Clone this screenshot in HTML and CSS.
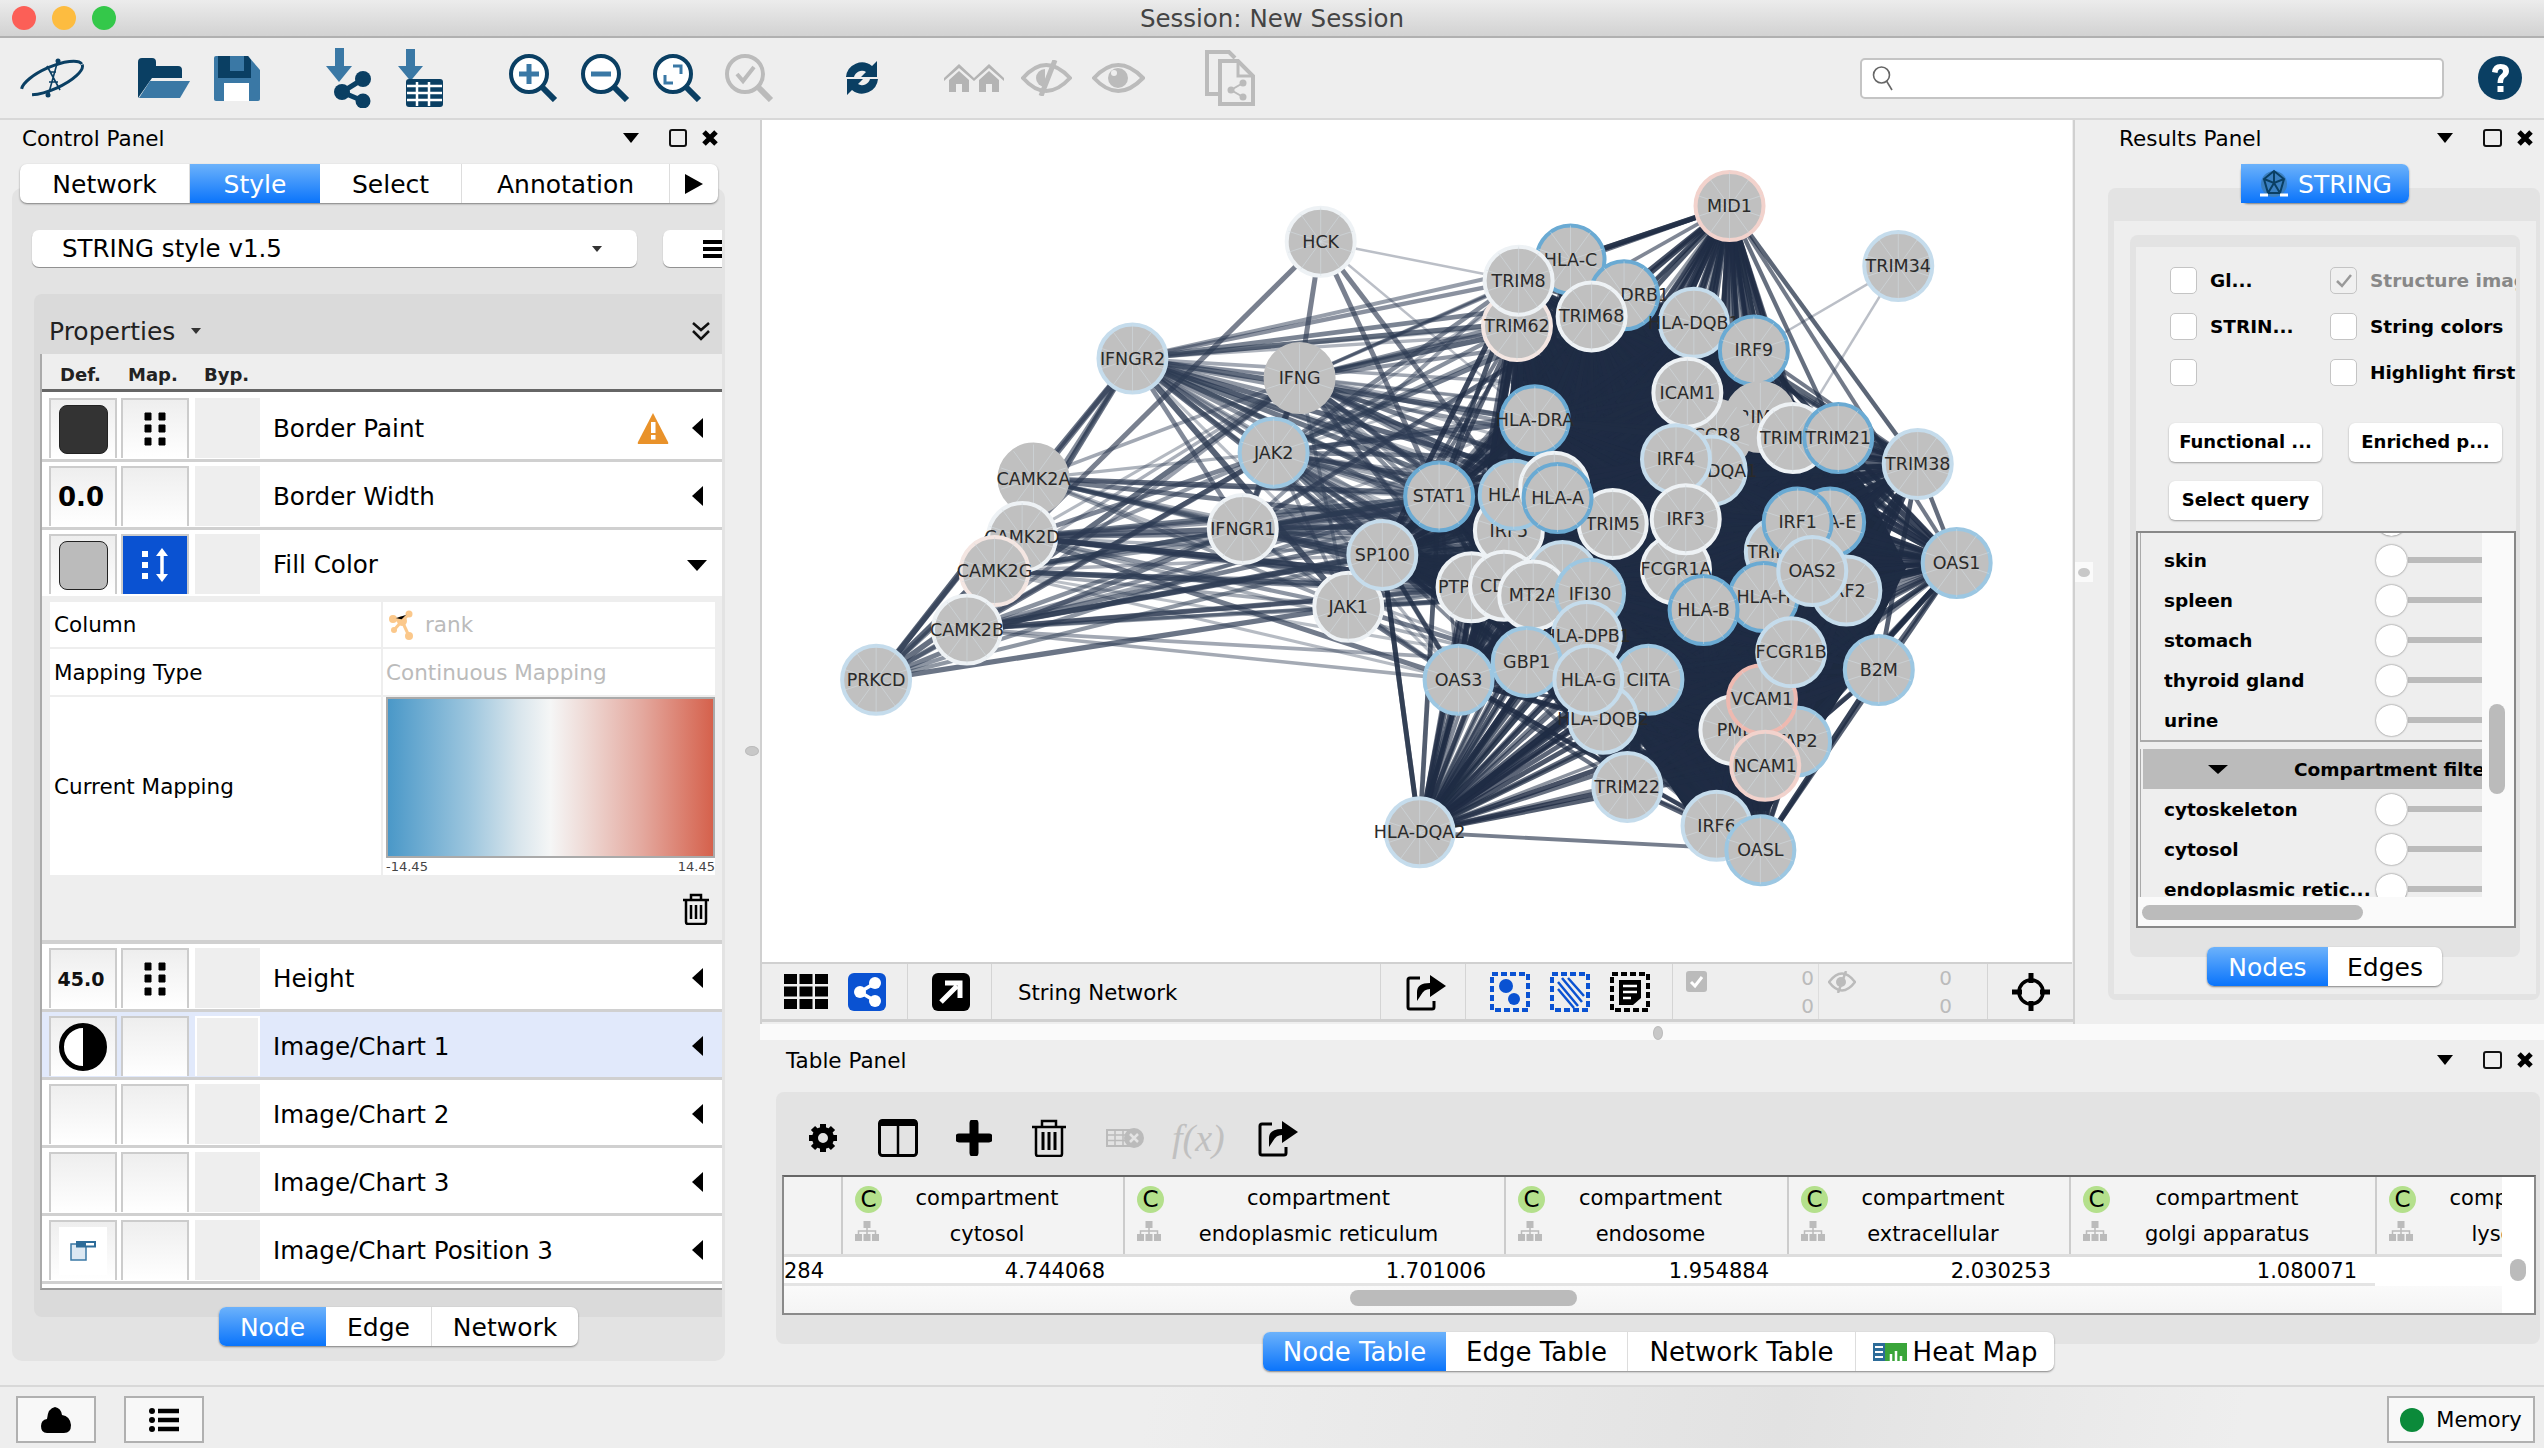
FILE: index.html
```html
<!DOCTYPE html>
<html lang="en">
<head>
    <meta charset="UTF-8">
    <title>Session: New Session</title>
    <link rel="stylesheet" href="styles.css">
</head>
<body>
    <div class="titlebar">
        <span class="light red"></span><span class="light amber"></span><span class="light green"></span>
        <span class="title">Session: New Session</span>
    </div>

    <div class="toolbar">
        <svg class="tb-logo" width="65" height="40" viewBox="0 0 65 40"><ellipse cx="32" cy="20" rx="33" ry="11" transform="rotate(-24 32 20)" fill="none" stroke="#0a3f63" stroke-width="3" stroke-dasharray="62 14 70 20"/><path d="M38 2 28 38M27 8 40 32M30 14 36 14M29 24 38 24" stroke="#0a3f63" stroke-width="1.6" fill="none"/><circle cx="38" cy="3" r="2.5" fill="#0a3f63"/><circle cx="28" cy="37" r="2.5" fill="#0a3f63"/></svg>
        <svg class="tb-g2" width="52" height="40" viewBox="0 0 52 40"><path d="M0 4Q0 0 4 0H14Q18 0 18 4V8H40Q44 8 44 12V20H14L0 40Z" fill="#0a3f63"/><path d="M12 23H52L42 40H1Z" fill="#3a78a5"/></svg>
        <svg class="tb-gap24" width="46" height="45" viewBox="0 0 46 45"><path d="M0 2Q0 0 2 0H34L46 14V43Q46 45 44 45H2Q0 45 0 43Z" fill="#3a78a5"/><path d="M4 0H34L37 4V22H4Z" fill="#0a3f63"/><rect x="16" y="0" width="14" height="15" fill="#3a78a5"/><rect x="10" y="27" width="25" height="18" fill="#fff"/></svg>
        <svg class="tb-g3" width="47" height="60" viewBox="0 0 47 60"><path d="M10 0H19V18H27L14 34 1 18H10Z" fill="#3a78a5"/><g fill="#0a3f63"><circle cx="38" cy="31" r="8"/><circle cx="17" cy="44" r="8"/><circle cx="38" cy="53" r="7.5"/></g><path d="M38 31 17 44 38 53" stroke="#0a3f63" stroke-width="5" fill="none"/></svg>
        <svg class="tb-gap25" width="46" height="58" viewBox="0 0 46 58"><path d="M9 0H18V17H26L13.5 32 1 17H9Z" fill="#3a78a5"/><rect x="9" y="30" width="37" height="28" rx="3" fill="#0a3f63"/><path d="M10 37H45M10 44H45M10 51H45M20 33V57M32 33V57" stroke="#fff" stroke-width="2.5"/></svg>
        <svg class="tb-g4" width="50" height="48" viewBox="0 0 50 48"><circle cx="21" cy="20" r="18" fill="#fff" stroke="#0a3f63" stroke-width="4"/><path d="M34 33 47 46" stroke="#0a3f63" stroke-width="6"/><path d="M21 10V30M11 20H31" stroke="#3a78a5" stroke-width="5"/></svg>
        <svg class="tb-gap22" width="50" height="48" viewBox="0 0 50 48"><circle cx="21" cy="20" r="18" fill="#fff" stroke="#0a3f63" stroke-width="4"/><path d="M34 33 47 46" stroke="#0a3f63" stroke-width="6"/><path d="M11 20H31" stroke="#3a78a5" stroke-width="5"/></svg>
        <svg class="tb-gap22" width="50" height="48" viewBox="0 0 50 48"><circle cx="21" cy="20" r="18" fill="#fff" stroke="#0a3f63" stroke-width="4"/><path d="M34 33 47 46" stroke="#0a3f63" stroke-width="6"/><path d="M21 12H29V20M13 21V29H21" fill="none" stroke="#3a78a5" stroke-width="3"/></svg>
        <svg class="tb-gap22" width="50" height="48" viewBox="0 0 50 48"><circle cx="21" cy="20" r="18" fill="none" stroke="#bbb" stroke-width="4"/><path d="M34 33 47 46" stroke="#bbb" stroke-width="6"/><path d="M13 20 19 27 30 13" fill="none" stroke="#bbb" stroke-width="4"/></svg>
        <svg class="tb-refresh" width="36" height="36" viewBox="0 0 36 36"><path d="M2 17A16 16 0 0 1 28 6L33 1V17H17L22 12A8 8 0 0 0 10 17ZM34 19A16 16 0 0 1 8 30L3 35V19H19L14 24A8 8 0 0 0 26 19Z" fill="#0a3f63"/></svg>
        <svg class="tb-g5" width="60" height="28" viewBox="0 0 60 28"><path d="M0 14 15 0 30 14 45 0 60 14V17L45 4 30 17 15 4 0 17Z" fill="#b4b4b4"/><path d="M5 16 15 7 25 16V28H18V20H12V28H5ZM35 16 45 7 55 16V28H48V20H42V28H35Z" fill="#b4b4b4"/></svg>
        <svg class="tb-gap17" width="51" height="36" viewBox="0 0 51 36"><path d="M2 18Q25 -8 49 18 25 44 2 18Z" fill="none" stroke="#bbb" stroke-width="4"/><path d="M24 9A9 9 0 1 0 24 27Z" fill="#bbb"/><path d="M34 0 20 36" stroke="#bbb" stroke-width="5"/></svg>
        <svg class="tb-gap20" width="53" height="32" viewBox="0 0 53 32"><path d="M2 16Q26 -10 51 16 26 42 2 16Z" fill="none" stroke="#bbb" stroke-width="4"/><circle cx="26" cy="16" r="10" fill="#bbb"/><circle cx="22" cy="11" r="3" fill="#eee"/></svg>
        <svg class="tb-doc" width="50" height="56" viewBox="0 0 50 56"><path d="M14 44H2V2H24L30 8" fill="none" stroke="#bbb" stroke-width="4"/><path d="M15 11H33L48 26V54H15Z" fill="#eee" stroke="#bbb" stroke-width="4"/><path d="M33 11V26H48" fill="none" stroke="#bbb" stroke-width="3"/><g fill="#bbb"><circle cx="38" cy="33" r="3.5"/><circle cx="26" cy="40" r="3.5"/><circle cx="38" cy="47" r="3.5"/></g><path d="M38 33 26 40 38 47" stroke="#bbb" stroke-width="2" fill="none"/></svg>
        <div class="search">
            <svg width="22" height="26" viewBox="0 0 22 26"><circle cx="9.5" cy="10" r="8" fill="none" stroke="#666" stroke-width="1.6"/><path d="M14.5 16 20 25" stroke="#666" stroke-width="1.6"/></svg>
        </div>
        <svg class="tb-help" width="44" height="44" viewBox="0 0 44 44"><circle cx="22" cy="22" r="22" fill="#0a3f63"/><path d="M14 16Q15 8 22.5 8 31 8 31 15 31 19 26.5 22 25 23.5 25 27H19.5Q19.5 21 23 18.5 25 17 25 15.5 25 13 22.5 13 20 13 19.5 17Z" fill="#fff"/><rect x="19.5" y="30" width="6" height="6" fill="#fff"/></svg>
    </div>

    <div class="main">
        <div class="left">
            <div class="panel-head l-head">
                <span class="panel-title">Control Panel</span>
                <span class="head-icons"><i class="tri-down"></i><i class="head-max"></i><svg width="18" height="18" viewBox="0 0 18 18"><path d="M3 3 15 15M15 3 3 15" stroke="#000" stroke-width="5"/></svg></span>
            </div>
            <div class="seg seg-main">
                <span class="w170">Network</span><span class="w130 on">Style</span><span class="w142">Select</span><span class="w208">Annotation</span><span class="w48"><i class="tri-right"></i></span>
            </div>
            <div class="cp-box">
                <div class="style-row">
                    <div class="combo"><span>STRING style v1.5</span><i class="tri-small"></i></div>
                    <div class="menu-btn"><svg width="20" height="18" viewBox="0 0 20 18"><path d="M0 2H20M0 9H20M0 16H20" stroke="#000" stroke-width="4"/></svg></div>
                </div>
                <div class="props">
                    <div class="props-head">
                        <span>Properties</span><i class="tri-small"></i>
                        <svg class="props-chev" width="20" height="20" viewBox="0 0 20 20"><path d="M2 2 10 9 18 2M2 10 10 18 18 10" fill="none" stroke="#111" stroke-width="2.5"/></svg>
                    </div>
                    <div class="vp-table">
                        <div class="vp-cols"><span class="c-def">Def.</span><span class="c-map">Map.</span><span>Byp.</span></div>

                        <div class="vp-row">
                            <div class="cell"><span class="swatch dark"></span></div>
                            <div class="cell"><svg class="dots" width="22" height="34" viewBox="0 0 22 34"><path d="M1 1H7V8H1ZM15 1H21V8H15ZM1 13H7V20H1ZM15 13H21V20H15ZM1 26H7V33H1ZM15 26H21V33H15Z" stroke="#000" stroke-linejoin="round"/></svg></div>
                            <div class="byp"></div>
                            <span class="vp-name">Border Paint</span>
                            <svg class="warn" width="32" height="32" viewBox="0 0 32 32"><path d="M16 1 31 30Q32 32 30 32H2Q0 32 1 30Z" fill="#e9922a"/><rect x="14" y="10" width="4.5" height="11" fill="#fff"/><rect x="14" y="23" width="4.5" height="4.5" fill="#fff"/></svg>
                            <i class="tri-left"></i>
                        </div>
                        <div class="vp-row">
                            <div class="cell"><span class="val-big">0.0</span></div>
                            <div class="cell"></div>
                            <div class="byp"></div>
                            <span class="vp-name">Border Width</span>
                            <i class="tri-left"></i>
                        </div>
                        <div class="vp-row open">
                            <div class="cell"><span class="swatch grey"></span></div>
                            <div class="cell blue"><svg width="28" height="34" viewBox="0 0 28 34"><path d="M1 3H7V9H1ZM1 14H7V20H1ZM1 25H7V31H1Z" fill="#fff"/><path d="M21 5V29" stroke="#fff" stroke-width="3.5"/><path d="M15 8 21 0 27 8ZM15 26 21 34 27 26Z" fill="#fff"/></svg></div>
                            <div class="byp"></div>
                            <span class="vp-name">Fill Color</span>
                            <i class="tri-down big"></i>
                        </div>
                        <div class="vp-detail">
                            <div class="d-grid">
                                <div class="d-key h44">Column</div>
                                <div class="d-val"><svg width="24" height="30" viewBox="0 0 24 30"><g fill="#fbc88b"><circle cx="20" cy="4" r="3.5"/><circle cx="4" cy="9" r="4"/><circle cx="13" cy="11" r="5"/><circle cx="5" cy="20" r="3"/><circle cx="20" cy="26" r="4"/></g><path d="M20 4 13 11 4 9M13 11 5 20M13 11 20 26" stroke="#fbc88b" stroke-width="3"/></svg><span>rank</span></div>
                                <div class="d-key h46">Mapping Type</div>
                                <div class="d-val plain">Continuous Mapping</div>
                                <div class="d-key h178">Current Mapping</div>
                                <div class="d-map">
                                    <div class="gradient"></div>
                                    <div class="grad-labels"><span>-14.45</span><span>14.45</span></div>
                                </div>
                            </div>
                            <div class="d-tools">
                                <svg width="28" height="32" viewBox="0 0 28 32"><path d="M1 7H27M9 6V2H19V6" fill="none" stroke="#000" stroke-width="2.5"/><path d="M4 8V29Q4 31 6 31H22Q24 31 24 29V8" fill="none" stroke="#000" stroke-width="2.5"/><path d="M9 12V26M14 12V26M19 12V26" stroke="#000" stroke-width="2.5"/></svg>
                            </div>
                        </div>
                        <div class="vp-row">
                            <div class="cell"><span class="val-small">45.0</span></div>
                            <div class="cell"><svg class="dots" width="22" height="34" viewBox="0 0 22 34"><path d="M1 1H7V8H1ZM15 1H21V8H15ZM1 13H7V20H1ZM15 13H21V20H15ZM1 26H7V33H1ZM15 26H21V33H15Z" stroke="#000" stroke-linejoin="round"/></svg></div>
                            <div class="byp"></div>
                            <span class="vp-name">Height</span>
                            <i class="tri-left"></i>
                        </div>
                        <div class="vp-row picked">
                            <div class="cell"><svg width="48" height="48" viewBox="0 0 48 48"><circle cx="24" cy="24" r="21.5" fill="#fff" stroke="#000" stroke-width="5"/><path d="M24 2A22 22 0 0 1 24 46Z"/></svg></div>
                            <div class="cell"></div>
                            <div class="byp"></div>
                            <span class="vp-name">Image/Chart 1</span>
                            <i class="tri-left"></i>
                        </div>
                        <div class="vp-row">
                            <div class="cell"></div><div class="cell"></div><div class="byp"></div>
                            <span class="vp-name">Image/Chart 2</span>
                            <i class="tri-left"></i>
                        </div>
                        <div class="vp-row">
                            <div class="cell"></div><div class="cell"></div><div class="byp"></div>
                            <span class="vp-name">Image/Chart 3</span>
                            <i class="tri-left"></i>
                        </div>
                        <div class="vp-row">
                            <div class="cell"><span class="pos-box"><svg width="26" height="20" viewBox="0 0 26 20"><rect x="1" y="3" width="15" height="16" fill="#dce8f2" stroke="#3a78a5" stroke-width="1.5"/><rect x="6" y="0" width="20" height="6.5" fill="#2d6c99"/><rect x="16" y="2" width="8" height="2.5" fill="#fff"/></svg></span></div>
                            <div class="cell"></div><div class="byp"></div>
                            <span class="vp-name">Image/Chart Position 3</span>
                            <i class="tri-left"></i>
                        </div>
                    </div>
                </div>
                <div class="seg seg-bottom">
                    <span class="w107 on">Node</span><span class="w106">Edge</span><span class="w146">Network</span>
                </div>
            </div>
        </div>

        <div class="work">
            <div class="work-top">
                <div class="net-col">
                    <svg id="graph" class="graph" viewBox="762 120 1310 842"></svg>
                    <div class="net-bar">
                        <div class="nb nb1">
                            <svg width="44" height="35" viewBox="0 0 44 35"><path d="M0 0H13V10H0ZM15.5 0H28.5V10H15.5ZM31 0H44V10H31ZM0 12.5H13V22.5H0ZM15.5 12.5H28.5V22.5H15.5ZM31 12.5H44V22.5H31ZM0 25H13V35H0ZM15.5 25H28.5V35H15.5ZM31 25H44V35H31Z"/></svg>
                            <svg width="38" height="38" viewBox="0 0 38 38"><rect width="38" height="38" rx="6" fill="#0a52d2"/><g fill="#fff"><circle cx="27" cy="10" r="6"/><circle cx="12" cy="19" r="6"/><circle cx="27" cy="28" r="6"/></g><path d="M27 10 12 19 27 28" stroke="#fff" stroke-width="3.5" fill="none"/></svg>
                        </div>
                        <div class="nb nb2">
                            <svg width="38" height="38" viewBox="0 0 38 38"><rect width="38" height="38" rx="6"/><path d="M9 29 25 13M13 10H28V25" fill="none" stroke="#fff" stroke-width="5"/></svg>
                        </div>
                        <div class="nb nb3">String Network</div>
                        <div class="nb nb4">
                            <svg width="40" height="38" viewBox="0 0 40 38"><path d="M14 5H4Q2 5 2 7V34Q2 36 4 36H26Q28 36 28 34V28" fill="none" stroke="#000" stroke-width="3"/><path d="M11 28V19Q11 10 24 10V2L40 13 24 24V16Q18 16 15 22Z"/></svg>
                        </div>
                        <div class="nb nb5">
                            <svg width="40" height="40" viewBox="0 0 40 40"><rect x="2" y="2" width="36" height="36" fill="none" stroke="#0a52d2" stroke-width="4" stroke-dasharray="6 3"/><circle cx="16" cy="14" r="7" fill="#0a52d2"/><circle cx="24" cy="27" r="6" fill="#0a52d2"/></svg>
                            <svg width="40" height="40" viewBox="0 0 40 40"><rect x="2" y="2" width="36" height="36" fill="none" stroke="#0a52d2" stroke-width="4" stroke-dasharray="6 3"/><path d="M8 10 28 34M8 17 24 36M12 6 32 30M18 6 34 24" stroke="#0a52d2" stroke-width="2.5"/></svg>
                            <svg width="40" height="40" viewBox="0 0 40 40"><rect x="2" y="2" width="36" height="36" fill="none" stroke="#000" stroke-width="4" stroke-dasharray="6 3"/><path d="M9 8H31V26L23 33H9Z"/><path d="M13 14H27M13 20H27M13 26H21" stroke="#fff" stroke-width="2.5"/></svg>
                        </div>
                        <div class="nb nb6">
                            <svg class="cnt-ico" width="21" height="21" viewBox="0 0 21 21"><rect width="21" height="21" rx="3" fill="#bbb"/><path d="M5 11 9 15 16 6" fill="none" stroke="#fff" stroke-width="3"/></svg>
                            <div class="cnt"><span>0</span><span>0</span></div>
                            <svg class="cnt-ico" width="28" height="22" viewBox="0 0 28 22"><path d="M1 11Q14 -6 27 11 14 28 1 11Z" fill="none" stroke="#bbb" stroke-width="2.5"/><circle cx="13" cy="11" r="5" fill="#bbb"/><path d="M18 0 10 22" stroke="#bbb" stroke-width="2.5"/></svg>
                            <div class="cnt wide"><span>0</span><span>0</span></div>
                        </div>
                        <div class="nb nb7">
                            <svg width="38" height="38" viewBox="0 0 38 38"><circle cx="19" cy="19" r="12" fill="none" stroke="#000" stroke-width="3.5"/><path d="M19 0V10M19 28V38M0 19H10M28 19H38" stroke="#000" stroke-width="5"/></svg>
                        </div>
                    </div>
                    <span class="grip grip-left"></span>
                </div>
                <div class="results">
                    <span class="grip-box"><i></i></span>
                    <div class="panel-head r-head">
                        <span class="panel-title">Results Panel</span>
                        <span class="head-icons"><i class="tri-down"></i><i class="head-max"></i><svg width="18" height="18" viewBox="0 0 18 18"><path d="M3 3 15 15M15 3 3 15" stroke="#000" stroke-width="5"/></svg></span>
                    </div>
                    <div class="seg seg-string">
                        <span class="w168 on"><svg width="32" height="30" viewBox="0 0 32 30"><circle cx="16" cy="15" r="13" fill="#3a7fc0"/><path d="M16 2 6 10 10 24H22L26 10ZM16 2V14M6 10 16 14 26 10M10 24 16 14 22 24" fill="none" stroke="#0a3f63" stroke-width="2"/><path d="M2 26H10M22 26H30" stroke="#fff" stroke-width="3"/></svg>STRING</span>
                    </div>
                    <div class="r-box">
                        <div class="r-inner">
                            <div class="r-well">
                                <div class="r-pad">
                                    <div class="opts">
                                        <label class="opt"><i class="chk"></i>Gl...</label>
                                        <label class="opt off"><i class="chk ticked"><svg width="20" height="16" viewBox="0 0 20 16"><path d="M3 8 8 13 17 2" fill="none" stroke="#999" stroke-width="2.5"/></svg></i>Structure image</label>
                                        <label class="opt"><i class="chk"></i>STRIN...</label>
                                        <label class="opt"><i class="chk"></i>String colors</label>
                                        <label class="opt"><i class="chk"></i></label>
                                        <label class="opt"><i class="chk"></i>Highlight first</label>
                                    </div>
                                    <div class="opt-btns">
                                        <span class="r-btn">Functional ...</span><span class="r-btn">Enriched p...</span><span class="r-btn">Select query</span>
                                    </div>
                                </div>
                                <div class="scrollbox">
                                    <div class="sb-top">
                                        <div class="sb-view">
                                            <div class="f-list">
                                                <div class="f-group">
                                                    <div class="f-row"><span></span><i class="knob"></i></div>
                                                    <div class="f-row"><span>skin</span><i class="knob"></i></div>
                                                    <div class="f-row"><span>spleen</span><i class="knob"></i></div>
                                                    <div class="f-row"><span>stomach</span><i class="knob"></i></div>
                                                    <div class="f-row"><span>thyroid gland</span><i class="knob"></i></div>
                                                    <div class="f-row"><span>urine</span><i class="knob"></i></div>
                                                </div>
                                                <div class="f-group second">
                                                    <div class="f-title"><i class="tri-down wide"></i><span>Compartment filter</span></div>
                                                    <div class="f-row"><span>cytoskeleton</span><i class="knob"></i></div>
                                                    <div class="f-row"><span>cytosol</span><i class="knob"></i></div>
                                                    <div class="f-row"><span>endoplasmic retic...</span><i class="knob"></i></div>
                                                </div>
                                            </div>
                                        </div>
                                        <div class="sb-v"><i></i></div>
                                    </div>
                                    <div class="sb-h"><i></i></div>
                                </div>
                            </div>
                            <div class="seg seg-nodes">
                                <span class="w121 on">Nodes</span><span class="w114">Edges</span>
                            </div>
                        </div>
                    </div>
                </div>
            </div>

            <div class="split-h"><span class="grip"></span></div>

            <div class="table-panel">
                <div class="panel-head t-head">
                    <span class="panel-title">Table Panel</span>
                    <span class="head-icons"><i class="tri-down"></i><i class="head-max"></i><svg width="18" height="18" viewBox="0 0 18 18"><path d="M3 3 15 15M15 3 3 15" stroke="#000" stroke-width="5"/></svg></span>
                </div>
                <div class="t-box">
                    <div class="t-tools">
                        <svg class="tt-gear" width="30" height="30" viewBox="0 0 30 30"><path d="M15 5V1M15 29V25M5 15H1M29 15H25M8 8 5 5M25 25 22 22M22 8 25 5M5 25 8 22" stroke="#000" stroke-width="6"/><circle cx="15" cy="15" r="8" fill="none" stroke="#000" stroke-width="6"/></svg>
                        <svg class="tt-split" width="40" height="38" viewBox="0 0 40 38"><rect x="1.5" y="1.5" width="37" height="35" rx="3" fill="none" stroke="#000" stroke-width="3"/><rect x="1" y="1" width="38" height="6" rx="2"/><path d="M20 4V36" stroke="#000" stroke-width="2.5"/></svg>
                        <svg class="tt-plus" width="36" height="36" viewBox="0 0 36 36"><path d="M18 3V33M3 18H33" stroke="#000" stroke-width="9" stroke-linecap="round"/></svg>
                        <svg class="tt-trash" width="34" height="38" viewBox="0 0 34 38"><path d="M0 8H34M10 7V2H24V7" fill="none" stroke="#000" stroke-width="2.5"/><path d="M4 9V35Q4 37 6 37H28Q30 37 30 35V9" fill="none" stroke="#000" stroke-width="2.5"/><path d="M11 13V31M17 13V31M23 13V31" stroke="#000" stroke-width="3"/></svg>
                        <svg class="tt-grid" width="39" height="22" viewBox="0 0 39 22"><rect x="1" y="3" width="24" height="16" fill="none" stroke="#bbb" stroke-width="2"/><path d="M1 8H25M1 13.5H25M9 3V19M17 3V19" stroke="#bbb" stroke-width="1.5"/><circle cx="28" cy="11" r="10" fill="#bbb"/><path d="M24 7 32 15M32 7 24 15" stroke="#e3e3e3" stroke-width="2.5"/></svg>
                        <span class="tt-fx">f(x)</span>
                        <svg class="tt-share" width="42" height="38" viewBox="0 0 40 38"><path d="M14 5H4Q2 5 2 7V34Q2 36 4 36H26Q28 36 28 34V28" fill="none" stroke="#000" stroke-width="3"/><path d="M11 28V19Q11 10 24 10V2L40 13 24 24V16Q18 16 15 22Z"/></svg>
                    </div>
                    <div class="tbl">
                        <div class="tbl-main">
                            <div class="tbl-head">
                                <div class="th th0"></div>
                                <div class="th w282"><i class="col-c">C</i><span>compartment<br>cytosol</span><svg class="col-tree" width="24" height="20" viewBox="0 0 24 20"><path d="M8.5 0H15.5V7H8.5ZM0 13H7V20H0ZM8.5 13H15.5V20H8.5ZM17 13H24V20H17Z" fill="#bbb"/><path d="M12 7V13M3.5 13V10H20.5V13" fill="none" stroke="#bbb" stroke-width="1.5"/></svg></div>
                                <div class="th w381"><i class="col-c">C</i><span>compartment<br>endoplasmic reticulum</span><svg class="col-tree" width="24" height="20" viewBox="0 0 24 20"><path d="M8.5 0H15.5V7H8.5ZM0 13H7V20H0ZM8.5 13H15.5V20H8.5ZM17 13H24V20H17Z" fill="#bbb"/><path d="M12 7V13M3.5 13V10H20.5V13" fill="none" stroke="#bbb" stroke-width="1.5"/></svg></div>
                                <div class="th w283"><i class="col-c">C</i><span>compartment<br>endosome</span><svg class="col-tree" width="24" height="20" viewBox="0 0 24 20"><path d="M8.5 0H15.5V7H8.5ZM0 13H7V20H0ZM8.5 13H15.5V20H8.5ZM17 13H24V20H17Z" fill="#bbb"/><path d="M12 7V13M3.5 13V10H20.5V13" fill="none" stroke="#bbb" stroke-width="1.5"/></svg></div>
                                <div class="th w282"><i class="col-c">C</i><span>compartment<br>extracellular</span><svg class="col-tree" width="24" height="20" viewBox="0 0 24 20"><path d="M8.5 0H15.5V7H8.5ZM0 13H7V20H0ZM8.5 13H15.5V20H8.5ZM17 13H24V20H17Z" fill="#bbb"/><path d="M12 7V13M3.5 13V10H20.5V13" fill="none" stroke="#bbb" stroke-width="1.5"/></svg></div>
                                <div class="th w306"><i class="col-c">C</i><span>compartment<br>golgi apparatus</span><svg class="col-tree" width="24" height="20" viewBox="0 0 24 20"><path d="M8.5 0H15.5V7H8.5ZM0 13H7V20H0ZM8.5 13H15.5V20H8.5ZM17 13H24V20H17Z" fill="#bbb"/><path d="M12 7V13M3.5 13V10H20.5V13" fill="none" stroke="#bbb" stroke-width="1.5"/></svg></div>
                                <div class="th w282"><i class="col-c">C</i><span>compartment<br>lysosome</span><svg class="col-tree" width="24" height="20" viewBox="0 0 24 20"><path d="M8.5 0H15.5V7H8.5ZM0 13H7V20H0ZM8.5 13H15.5V20H8.5ZM17 13H24V20H17Z" fill="#bbb"/><path d="M12 7V13M3.5 13V10H20.5V13" fill="none" stroke="#bbb" stroke-width="1.5"/></svg></div>
                            </div>
                            <div class="tbl-row">
                                <span class="td th0 first">284</span><span class="td w282">4.744068</span><span class="td w381">1.701006</span><span class="td w283">1.954884</span><span class="td w282">2.030253</span><span class="td w306">1.080071</span>
                            </div>
                            <div class="tbl-scroll"><i></i></div>
                        </div>
                        <div class="tbl-v"><i></i></div>
                    </div>
                </div>
                <div class="seg seg-table">
                    <span class="w183 on">Node Table</span><span class="w182">Edge Table</span><span class="w228">Network Table</span><span class="w198"><svg width="34" height="18" viewBox="0 0 34 18"><rect width="12" height="18" fill="#2d6c99"/><rect x="12" width="22" height="18" fill="#3aa53a"/><path d="M2 4H10M2 9H10M2 14H10" stroke="#fff" stroke-width="2"/><path d="M18 18V11M23 18V8M28 18V13" stroke="#fff" stroke-width="2.5"/></svg>Heat Map</span>
                </div>
            </div>
        </div>
    </div>

    <div class="statusbar">
        <span class="st-btn"><svg width="30" height="30" viewBox="0 0 30 30"><path d="M6 28Q0 28 0 21 0 15 6 14 7 3 14 2 20 3 21 10 29 11 30 20 30 28 23 28Z"/></svg></span>
        <span class="st-btn"><svg width="30" height="24" viewBox="0 0 30 24"><g><circle cx="3" cy="3" r="3"/><circle cx="3" cy="12" r="3"/><circle cx="3" cy="21" r="3"/></g><path d="M9 3H30M9 12H30M9 21H30" stroke="#000" stroke-width="4.5"/></svg></span>
        <span class="st-btn memory"><i></i>Memory</span>
    </div>

    <script src="graph.js"></script>
</body>
</html>
```
FILE: styles.css
```css
* {
    box-sizing: border-box;
}
html, body {
    margin: 0;
    padding: 0;
}
body {
    width: 2544px;
    height: 1448px;
    overflow: hidden;
    background-color: #eee;
    color: #000;
    font-family: "DejaVu Sans", sans-serif;
    font-size: 23px;
    display: flex;
    flex-direction: column;
}
i {
    font-style: normal;
    display: block;
}
svg {
    display: block;
    flex: none;
}

/* window chrome */
.titlebar {
    height: 38px;
    flex: none;
    display: flex;
    align-items: center;
    padding-left: 12px;
    gap: 16px;
    position: relative;
    background: linear-gradient(#ececec, #d2d2d2);
    border-bottom: 2px solid #b0b0b0;
}
.light {
    width: 24px;
    height: 24px;
    border-radius: 50%;
}
.red { background-color: #fc5f57; }
.amber { background-color: #fdbc40; }
.green { background-color: #34c84a; }
.title {
    position: absolute;
    left: 0;
    right: 0;
    text-align: center;
    color: #444;
    font-size: 24.5px;
}

/* main toolbar */
.toolbar {
    height: 82px;
    flex: none;
    display: flex;
    align-items: center;
    padding: 0 22px 0 20px;
    border-bottom: 2px solid #d8d8d8;
}
.tb-g2 { margin-left: 53px; }
.tb-gap24 { margin-left: 24px; }
.tb-g3 { margin-left: 65px; }
.tb-gap25 { margin-left: 25px; }
.tb-g4 { margin-left: 65px; }
.tb-gap22 { margin-left: 22px; }
.tb-refresh { margin-left: 70px; }
.tb-g5 { margin-left: 64px; }
.tb-gap17 { margin-left: 17px; }
.tb-gap20 { margin-left: 20px; }
.tb-doc { margin-left: 60px; }
.search {
    margin-left: auto;
    width: 584px;
    height: 41px;
    background-color: #fff;
    border: 2px solid #c4c4c4;
    border-radius: 5px;
    display: flex;
    align-items: center;
    padding-left: 10px;
}
.tb-help { margin-left: 34px; }

.main {
    flex: 1;
    display: flex;
    min-height: 0;
}

/* panel header + little triangles */
.panel-head {
    height: 44px;
    display: flex;
    align-items: center;
    justify-content: space-between;
    padding: 0 10px 8px 22px;
}
.l-head {
    padding-right: 41px;
}
.panel-title {
    font-size: 21.5px;
}
.head-icons {
    display: flex;
    align-items: center;
}
.head-max {
    width: 18px;
    height: 18px;
    border: 2px solid #111;
    border-radius: 3px;
    margin: 0 14px 0 30px;
}
.tri-down {
    width: 0;
    height: 0;
    border-left: 8px solid transparent;
    border-right: 8px solid transparent;
    border-top: 10px solid #000;
}
.tri-down.big {
    border-left-width: 10px;
    border-right-width: 10px;
    border-top-width: 11px;
    margin-left: auto;
    margin-right: 15px;
}
.tri-down.wide {
    border-left-width: 10px;
    border-right-width: 10px;
    border-top-width: 9px;
}
.tri-left {
    width: 0;
    height: 0;
    border-top: 10px solid transparent;
    border-bottom: 10px solid transparent;
    border-right: 11px solid #000;
    margin-left: auto;
    margin-right: 19px;
}
.tri-right {
    width: 0;
    height: 0;
    border-top: 10px solid transparent;
    border-bottom: 10px solid transparent;
    border-left: 18px solid #000;
}
.tri-small {
    width: 0;
    height: 0;
    border-left: 5px solid transparent;
    border-right: 5px solid transparent;
    border-top: 6px solid #333;
}

/* segmented tabs */
.seg {
    display: flex;
    position: relative;
    z-index: 2;
    height: 39px;
    background-color: #fff;
    border-radius: 7px;
    box-shadow: 0 1px 2px rgba(0, 0, 0, .45);
    font-size: 25px;
    width: max-content;
}
.seg span {
    display: flex;
    align-items: center;
    justify-content: center;
    border-right: 1px solid #ddd;
    padding-top: 1px;
}
.seg span:first-child {
    border-radius: 7px 0 0 7px;
}
.seg span:last-child {
    border-right: 0;
    border-radius: 0 7px 7px 0;
}
.seg .on {
    color: #fff;
    background: linear-gradient(#6cb2fb, #0a74fb);
    border-right: 0;
}
.w48 { width: 48px; }
.w106 { width: 106px; }
.w107 { width: 107px; }
.w114 { width: 114px; }
.w121 { width: 121px; }
.w130 { width: 130px; }
.w142 { width: 142px; }
.w146 { width: 146px; }
.w168 { width: 168px; }
.w170 { width: 170px; }
.w182 { width: 182px; }
.w183 { width: 183px; }
.w198 { width: 198px; }
.w208 { width: 208px; }
.w228 { width: 228px; }
.w282 { width: 282px; }
.w283 { width: 283px; }
.w306 { width: 306px; }
.w381 { width: 381px; }

/* control panel */
.left {
    width: 760px;
    flex: none;
}
.seg-main {
    margin-left: 20px;
}
.cp-box {
    margin: -15px 0 0 12px;
    width: 713px;
    height: 1173px;
    padding-top: 42px;
    background-color: #e3e3e3;
    border-radius: 10px;
    position: relative;
}
.seg-bottom {
    margin: -10px 0 0 207px;
}
.style-row {
    display: flex;
    padding-left: 20px;
    height: 38px;
    overflow: hidden;
    margin-right: 3px;
    gap: 26px;
}
.combo {
    width: 605px;
    height: 37px;
    flex: none;
    background-color: #fff;
    border-radius: 7px;
    box-shadow: 0 1px 1px rgba(0, 0, 0, .4);
    display: flex;
    align-items: center;
    justify-content: space-between;
    padding: 0 35px 0 30px;
    font-size: 24.5px;
}
.menu-btn {
    width: 70px;
    height: 37px;
    flex: none;
    background-color: #fff;
    border-radius: 7px;
    box-shadow: 0 1px 1px rgba(0, 0, 0, .4);
    display: flex;
    align-items: center;
    padding-left: 40px;
}
.props {
    margin: 26px 3px 0 22px;
    height: 1023px;
    background-color: #dadada;
    border-radius: 8px 0 0 8px;
    overflow: hidden;
    padding-left: 6px;
}
.props-head {
    height: 60px;
    display: flex;
    align-items: center;
    gap: 16px;
    padding: 14px 0 0 9px;
    font-size: 25px;
    color: #222;
}
.props-chev {
    margin-left: auto;
    margin-right: 11px;
}
.vp-table {
    height: 936px;
    background-color: #fff;
    border-left: 2px solid #aaa;
    border-bottom: 2px solid #999;
}
.vp-cols {
    height: 38px;
    background-color: #eee;
    border-bottom: 3px solid #666;
    display: flex;
    align-items: center;
    padding: 5px 0 0 18px;
    font-size: 18px;
    font-weight: bold;
    color: #222;
}
.c-def { width: 68px; }
.c-map { width: 76px; }
.vp-row {
    height: 68px;
    display: flex;
    align-items: flex-start;
    padding: 4px 0 0 7px;
    border-bottom: 3px solid #d0d0d0;
    margin-top: 0;
}
.vp-cols + .vp-row {
    margin-top: 2px;
}
.vp-row.open {
    height: 66px;
    border-bottom: 0;
}
.vp-row.picked {
    background-color: #e1e9fb;
}
.vp-row.picked .cell {
    background: linear-gradient(#eee, #fff);
}
.vp-row.picked .byp {
    border: 2px solid #fff;
    border-bottom: 0;
}
.cell {
    width: 68px;
    height: 60px;
    flex: none;
    margin-right: 4px;
    border: 2px solid #ccc;
    border-bottom: 0;
    background: linear-gradient(#eee, #fff);
    display: flex;
    align-items: center;
    justify-content: center;
}
.cell.blue {
    background: #0a52d2;
    border-color: #ccc;
}
.byp {
    width: 65px;
    height: 60px;
    flex: none;
    margin-left: 2px;
    background-color: #eee;
}
.vp-name {
    margin-left: 13px;
    line-height: 62px;
    font-size: 24.6px;
}
.warn {
    margin: 14px 23px 0 auto;
}
.warn + .tri-left {
    margin-left: 0;
}
.vp-row .tri-left,
.vp-row .tri-down {
    margin-top: 20px;
}
.vp-row .tri-down {
    margin-top: 26px;
}
.swatch {
    width: 49px;
    height: 49px;
    border-radius: 8px;
    border: 1px solid #222;
}
.dark { background-color: #333; }
.grey { background-color: #bbb; }
.val-big {
    font-size: 26px;
    font-weight: bold;
    margin-right: 4px;
}
.val-small {
    font-size: 19px;
    font-weight: bold;
    color: #111;
    margin-right: 4px;
}
.pos-box {
    width: 48px;
    height: 48px;
    background-color: #fff;
    display: flex;
    align-items: center;
    justify-content: center;
}
.vp-detail {
    height: 348px;
    background-color: #eee;
    border-bottom: 4px solid #d0d0d0;
    padding: 6px 4px 0 8px;
}
.d-grid {
    display: grid;
    grid-template-columns: 331px 332px;
    gap: 2px;
    font-size: 21.5px;
}
.d-key {
    background-color: #fff;
    padding-left: 4px;
    display: flex;
    align-items: center;
}
.h44 { height: 45px; }
.h46 { height: 46px; }
.h178 { height: 178px; }
.d-val {
    background-color: #fff;
    display: flex;
    align-items: center;
    gap: 12px;
    padding-left: 6px;
    color: #bbb;
}
.d-val.plain {
    padding-left: 3px;
}
.d-map {
    background-color: #fff;
    padding-left: 3px;
}
.gradient {
    height: 161px;
    border: 2px solid #aaa;
    background: linear-gradient(to right, #4a98c8, #9dc6de 25%, #d8e5ec 40%, #f5f6f6 50%, #efdcd8 60%, #e4a99f 78%, #d5614c);
}
.grad-labels {
    display: flex;
    justify-content: space-between;
    font-size: 13px;
    color: #444;
    height: 16px;
    line-height: 18px;
}
.d-tools {
    display: flex;
    justify-content: flex-end;
    padding: 18px 8px 0 0;
}

/* network view */
.work {
    flex: 1;
    display: flex;
    flex-direction: column;
    min-width: 0;
}
.work-top {
    display: flex;
    height: 904px;
    flex: none;
}
.net-col {
    width: 1313px;
    flex: none;
    border-left: 2px solid #d0d0d0;
    position: relative;
}
.graph {
    width: 1310px;
    height: 844px;
    background-color: #fff;
    border-bottom: 2px solid #d0d0d0;
}
.graph text {
    font-family: "DejaVu Sans", sans-serif;
    font-size: 17.5px;
    fill: #2a2a2a;
    text-anchor: middle;
    dominant-baseline: central;
}
.net-bar {
    height: 58px;
    display: flex;
    border-bottom: 3px solid #d0d0d0;
    background-color: #eee;
}
.nb {
    height: 55px;
    display: flex;
    align-items: center;
    border-right: 1px solid #d4d4d4;
}
.nb1 { width: 146px; padding-left: 22px; gap: 20px; }
.nb2 { width: 84px; padding-left: 24px; }
.nb3 { width: 389px; padding: 2px 0 0 26px; font-size: 21.3px; }
.nb4 { width: 85px; padding-left: 25px; }
.nb5 { width: 207px; padding-left: 24px; gap: 20px; }
.nb6 { width: 315px; padding-left: 13px; align-items: flex-start; }
.nb7 { flex: 1; padding-left: 24px; border-right: 0; }
.cnt-ico { margin-top: 7px; }
.cnt {
    width: 112px;
    display: flex;
    flex-direction: column;
    align-items: flex-end;
    color: #bbb;
    font-size: 20px;
    line-height: 28px;
    height: 55px;
    padding: 0 4px 0 0;
    border-right: 1px solid #ddd;
    margin-right: 9px;
}
.cnt.wide {
    width: 100px;
    border-right: 0;
    margin: 0;
}
.grip {
    display: block;
    width: 10px;
    height: 14px;
    border-radius: 50%;
    background-color: #c8c8c8;
    border: 1px solid #bbb;
}
.grip-left {
    position: absolute;
    left: -17px;
    top: 626px;
    width: 14px;
    height: 10px;
}
.split-h {
    height: 16px;
    flex: none;
    background-color: #fafafa;
    display: flex;
    justify-content: center;
    padding: 2px 0 0 12px;
}

/* results panel */
.results {
    flex: 1;
    min-width: 0;
    border-left: 2px solid #d0d0d0;
    position: relative;
}
.grip-box {
    position: absolute;
    left: 0;
    top: 442px;
    width: 18px;
    height: 20px;
    background-color: #fafafa;
    display: flex;
    align-items: center;
    justify-content: center;
}
.grip-box i {
    width: 12px;
    height: 9px;
    border-radius: 50%;
    background-color: #c8c8c8;
}
.r-head {
    padding: 0 10px 8px 44px;
}
.r-head .head-max {
    width: 19px;
}
.seg-string {
    margin-left: 166px;
}
.seg-string span {
    gap: 8px;
}
.r-box {
    margin: -15px 0 0 33px;
    width: 432px;
    height: 812px;
    background-color: #e3e3e3;
    border-radius: 8px;
    padding: 33px 4px 6px 6px;
}
.r-inner {
    height: 773px;
    background-color: #eee;
    padding: 14px 16px 0;
}
.r-well {
    height: 722px;
    background-color: #e3e3e3;
    border-radius: 8px;
    padding: 12px 4px 0 6px;
}
.r-pad {
    height: 284px;
    background-color: #eee;
    padding: 20px 0 0 34px;
    overflow: hidden;
}
.opts {
    display: grid;
    grid-template-columns: 160px 300px;
    grid-auto-rows: 27px;
    row-gap: 19px;
    font-size: 18.5px;
    white-space: nowrap;
}
.opt {
    display: flex;
    align-items: center;
    gap: 13px;
    font-weight: 600;
}
.opt.off {
    color: #888;
}
.chk {
    width: 27px;
    height: 27px;
    flex: none;
    background-color: #fff;
    border: 1px solid #c4c4c4;
    border-radius: 5px;
}
.chk.ticked {
    background-color: #f0f0f0;
    display: flex;
    align-items: center;
    justify-content: center;
}
.opt-btns {
    display: grid;
    grid-template-columns: 153px 153px;
    grid-auto-rows: 39px;
    column-gap: 27px;
    row-gap: 19px;
    margin: 37px 0 0 -1px;
}
.r-btn {
    background-color: #fff;
    border-radius: 6px;
    box-shadow: 0 1px 2px rgba(0, 0, 0, .35);
    text-align: center;
    line-height: 38px;
    font-size: 18px;
    font-weight: 600;
}
.scrollbox {
    height: 397px;
    border: 2px solid #888;
    background-color: #fff;
    display: flex;
    flex-direction: column;
}
.sb-top {
    display: flex;
    height: 364px;
    flex: none;
}
.sb-view {
    width: 344px;
    flex: none;
    overflow: hidden;
    padding-left: 2px;
    background-color: #eee;
}
.f-list {
    margin-top: -33px;
}
.f-group {
    width: 342px;
    border-left: 1px solid #aaa;
    border-bottom: 2px solid #aaa;
    outline-offset: 0;
    font-size: 18.5px;
    font-weight: 600;
    padding-left: 2px;
}
.f-group.second {
    margin-top: 7px;
    border-bottom: 0;
}
.f-row {
    height: 40px;
    display: flex;
    align-items: center;
    padding-left: 21px;
    white-space: nowrap;
    background: linear-gradient(to right, transparent 265px, #bbb 265px) 0 50%/100% 6px no-repeat;
}
.f-row span {
    width: 212px;
    flex: none;
    overflow: hidden;
}
.knob {
    width: 31px;
    height: 31px;
    flex: none;
    border-radius: 50%;
    background-color: #fff;
    box-shadow: 0 0 2px rgba(0, 0, 0, .6);
}
.f-title {
    height: 40px;
    background-color: #bbb;
    display: flex;
    align-items: center;
    white-space: nowrap;
    padding-left: 65px;
    gap: 66px;
}
.sb-v {
    flex: 1;
    background-color: #fafafa;
    padding: 171px 0 0 7px;
}
.sb-v i {
    width: 16px;
    height: 90px;
    border-radius: 8px;
    background-color: #bbb;
}
.sb-h {
    flex: 1;
    padding: 8px 0 0 4px;
    background-color: #fafafa;
}
.sb-h i {
    width: 221px;
    height: 15px;
    border-radius: 8px;
    background-color: #bbb;
}
.seg-nodes {
    margin: -10px 0 0 77px;
    font-size: 25px;
}

/* table panel */
.table-panel {
    flex: 1;
    position: relative;
}
.t-head {
    height: 52px;
    padding: 0 10px 12px 26px;
}
.t-head .head-max {
    width: 19px;
}
.t-box {
    margin-left: 16px;
    width: 1764px;
    height: 252px;
    background-color: #e3e3e3;
    border-radius: 8px;
    padding-top: 27px;
}
.t-tools {
    height: 56px;
    display: flex;
    align-items: center;
    padding-left: 32px;
    padding-bottom: 18px;
}
.tt-split { margin-left: 40px; }
.tt-plus { margin-left: 38px; }
.tt-trash { margin-left: 40px; }
.tt-grid { margin-left: 40px; }
.tt-fx {
    margin-left: 27px;
    font-family: "Liberation Serif", serif;
    font-style: italic;
    font-size: 38px;
    color: #c0c0c0;
    width: 59px;
}
.tt-share { margin-left: 26px; }
.tbl {
    margin-left: 6px;
    width: 1754px;
    height: 140px;
    display: flex;
    background-color: #fff;
    border: 2px solid #8a8a8a;
    border-top-color: #666;
}
.tbl-main {
    width: 1718px;
    flex: none;
    overflow: hidden;
}
.tbl-head {
    height: 80px;
    display: flex;
    width: max-content;
    background-color: #f3f3f3;
    border-bottom: 3px solid #ddd;
    font-size: 21px;
}
.th {
    flex: none;
    height: 77px;
    border-left: 2px solid #ccc;
    position: relative;
    text-align: center;
    padding: 3px 36px 0 44px;
    line-height: 36px;
    white-space: nowrap;
}
.th.th0 {
    border-left: 0;
    padding: 0;
}
.th0 { width: 57px; }
.col-c {
    position: absolute;
    left: 12px;
    top: 9px;
    width: 27px;
    height: 27px;
    border-radius: 50%;
    background-color: #b4e08c;
    font-size: 23px;
    line-height: 27px;
    text-align: center;
}
.col-tree {
    position: absolute;
    left: 12px;
    top: 44px;
}
.tbl-row {
    height: 29px;
    display: flex;
    background-color: #fff;
    border-bottom: 3px solid #e4e4e4;
    font-size: 21px;
    width: max-content;
    line-height: 28px;
}
.td {
    flex: none;
    text-align: right;
    padding-right: 18px;
}
.td.first {
    text-align: left;
    padding: 0 0 0 0;
}
.tbl-scroll {
    height: 29px;
    background: linear-gradient(#fafafa, #f4f4f4);
    padding: 4px 0 0 566px;
}
.tbl-scroll i {
    width: 227px;
    height: 16px;
    border-radius: 8px;
    background-color: #bbb;
}
.tbl-v {
    flex: 1;
    padding: 82px 0 0 8px;
}
.tbl-v i {
    width: 16px;
    height: 22px;
    border-radius: 8px;
    background-color: #bbb;
}
.seg-table {
    margin: -12px 0 0 503px;
    font-size: 26px;
}
.seg-table span {
    gap: 6px;
}

/* status bar */
.statusbar {
    height: 63px;
    flex: none;
    display: flex;
    padding: 9px 9px 0 16px;
    gap: 28px;
    border-top: 2px solid #d8d8d8;
    background: linear-gradient(100deg, #eee 45%, #e2e2e2 70%, #eee 88%);
}
.st-btn {
    width: 80px;
    height: 47px;
    border: 2px solid #b0b0b0;
    background-color: #f8f8f8;
    display: flex;
    align-items: center;
    justify-content: center;
}
.st-btn.memory {
    width: 148px;
    margin-left: auto;
    font-size: 21px;
    gap: 12px;
}
.memory i {
    width: 24px;
    height: 24px;
    border-radius: 50%;
    background-color: #0b8a3a;
}
```
FILE: graph.js
```js
// positions are taken from the 1568px wide view, colours by border type
const SCALE = 2544 / 1568;
const STRONG = '#6aaad3', MID = '#9cc7e2', PALE = '#c5dcec', WHITE = '#eef2f5',
      PINK = '#eeb9b0', ROSE = '#f2d2cc', BLUSH = '#f4e6e2', NONE = '#c0c0c0';

// drawn in this order, so later nodes sit on top. '' = ring only, its label never shows
const nodes = [
    ['HCK', 814, 149, WHITE, 'x'], ['TRIM34', 1170, 164, PALE, 'x'],
    ['MID1', 1066, 127, ROSE, 'c'], ['IFNGR2', 698, 221, PALE, 't'], ['IFNG', 801, 233, NONE, 't'],
    ['CAMK2A', 637, 295, NONE, 'l'], ['JAK2', 785, 279, MID, 't'], ['IFNGR1', 766, 326, WHITE, 't'],
    ['CAMK2D', 630, 331, WHITE, 'l'], ['CAMK2G', 613, 352, BLUSH, 'l'], ['CAMK2B', 596, 388, WHITE, 'l'],
    ['PRKCD', 540, 419, PALE, 'p'], ['JAK1', 831, 374, WHITE, 'l'],
    ['HLA-C', 968, 160, STRONG, 'c'], ['HLA-DRB1', 1001, 182, STRONG, 'c'], ['TRIM62', 935, 201, BLUSH, 'c'],
    ['TRIM8', 936, 173, WHITE, 'c'], ['TRIM68', 981, 195, WHITE, 'c'], ['HLA-DQB1', 1044, 199, PALE, 'c'],
    ['IRF9', 1081, 216, STRONG, 'c'], ['TRIM31', 1085, 257, NONE, 'c'], ['CCR8', 1058, 268, NONE, 'c'],
    ['ICAM1', 1040, 242, WHITE, 'c'], ['HLA-DRA', 946, 259, STRONG, 'c'], ['TRIM26', 1105, 270, WHITE, 'c'],
    ['TRIM21', 1133, 270, STRONG, 'c'], ['TRIM38', 1182, 286, PALE, 'c'], ['HLA-DQA1', 1055, 290, PALE, 'c'],
    ['IRF4', 1033, 283, PALE, 'c'], ['IRF5', 930, 327, WHITE, 'c'], ['HLA-F', 933, 305, MID, 'c'],
    ['', 958, 300, WHITE, 'c'], ['TRIM5', 994, 323, WHITE, 'c'], ['HLA-A', 960, 307, STRONG, 'c'],
    ['STAT1', 887, 306, STRONG, 'c'], ['FCGR1A', 1033, 351, WHITE, 'c'], ['IRF3', 1039, 320, WHITE, 'c'],
    ['SP100', 852, 342, PALE, 'c'], ['TRIM14', 1097, 340, PALE, 'c'], ['HLA-E', 1128, 322, STRONG, 'c'],
    ['IRF1', 1108, 322, STRONG, 'c'], ['OAS1', 1206, 347, MID, 'c'], ['IRF2', 1138, 364, PALE, 'c'],
    ['HLA-H', 1087, 368, STRONG, 'c'], ['OAS2', 1117, 352, PALE, 'c'], ['HLA-B', 1050, 376, STRONG, 'c'],
    ['PTPN22', 907, 362, WHITE, 'c'], ['CD74', 927, 361, WHITE, 'c'], ['', 963, 355, PALE, 'c'],
    ['MT2A', 945, 367, WHITE, 'c'], ['IFI30', 980, 366, MID, 'c'], ['HLA-DPB1', 978, 392, PALE, 'c'],
    ['OAS3', 899, 419, MID, 'c'], ['CIITA', 1016, 419, MID, 'c'], ['HLA-DQB2', 988, 443, PALE, 'c'],
    ['GBP1', 941, 408, MID, 'c'], ['HLA-G', 979, 419, PALE, 'c'], ['B2M', 1158, 413, MID, 'c'],
    ['TAP2', 1107, 457, MID, 'c'], ['PML', 1069, 450, WHITE, 'c'], ['VCAM1', 1086, 431, PINK, 'c'],
    ['FCGR1B', 1104, 402, PALE, 'c'], ['NCAM1', 1088, 472, ROSE, 'c'], ['TRIM22', 1003, 485, PALE, 'c'],
    ['HLA-DQA2', 875, 513, PALE, 'c'], ['IRF6', 1058, 509, PALE, 'c'], ['OASL', 1085, 524, MID, 'c']
].map(([name, x, y, border, group], id) => ({ id, name, x: x * SCALE, y: y * SCALE, border, group }));

const byName = name => nodes.find(n => n.name === name);
const core = nodes.filter(n => n.group === 'c');
const leftAll = nodes.filter(n => 'tlp'.includes(n.group));

// how far into the core each part of the left group reaches
const nearTargets = ['STAT1', 'SP100', 'HLA-F', 'HLA-A', 'IRF5', 'PTPN22', 'CD74', 'MT2A', 'IFI30', 'OAS3', 'GBP1'].map(byName);
const wideTargets = nearTargets.concat(['HLA-DRA', 'TRIM62', 'TRIM8', 'TRIM5', 'HLA-C', 'HLA-DRB1', 'ICAM1',
    'IRF4', 'IRF3', 'TRIM68', 'HLA-DQB1', 'FCGR1A', 'IRF1', 'TRIM21'].map(byName));
const prkcdTargets = ['STAT1', 'SP100'].map(byName);

// repeatable pseudo random weight for each edge
function weight(a, b) {
    const v = Math.sin(a.id * 12.9898 + b.id * 78.233) * 43758.5453;
    return v - Math.floor(v);
}

const svgNS = 'http://www.w3.org/2000/svg';
const svg = document.getElementById('graph');

function add(tag, attrs, parent = svg) {
    const el = document.createElementNS(svgNS, tag);
    for (const key in attrs) el.setAttribute(key, attrs[key]);
    parent.appendChild(el);
    return el;
}

function edge(a, b, width, opacity, color = '#1f2c44') {
    add('line', { x1: a.x, y1: a.y, x2: b.x, y2: b.y, stroke: color, 'stroke-width': width, 'stroke-opacity': opacity });
}

// solid middle of the hairball
const blob = [[935, 225], [1025, 190], [1100, 240], [1150, 300], [1175, 350], [1140, 420], [1090, 500],
    [1040, 500], [1000, 440], [960, 420], [905, 345]];
add('polygon', { points: blob.map(p => p.map(v => v * SCALE).join(',')).join(' '), fill: '#1d2a40' });

// thin strays first
const thin = [['HCK', 'TRIM8'], ['TRIM8', 'IFNG'], ['TRIM62', 'IFNG'], ['IFNG', 'HLA-C'], ['TRIM34', 'IRF9'],
    ['TRIM34', 'TRIM26'], ['JAK1', 'OAS3'], ['HCK', 'HLA-DRA']];
thin.forEach(([a, b]) => edge(byName(a), byName(b), 2.5, 0.3));

const heavy = [['HCK', 'IFNG'], ['HCK', 'CAMK2D'], ['HCK', 'STAT1'], ['HCK', 'HLA-F'], ['MID1', 'HLA-C'],
    ['SP100', 'HLA-DQA2'], ['SP100', 'OAS3']];
heavy.forEach(([a, b]) => edge(byName(a), byName(b), 5, 0.6));

// left group: to each other and into the core
leftAll.forEach((a, i) => {
    leftAll.slice(i + 1).forEach(b => {
        const w = weight(a, b);
        edge(a, b, 3 + w * 3, 0.35 + w * 0.45, '#2c3a52');
    });
    const targets = a.group === 't' ? wideTargets : a.group === 'l' ? nearTargets : prkcdTargets;
    targets.forEach(b => {
        const w = weight(a, b);
        if (w > 0.15) edge(a, b, 2.5 + w * 3, 0.22 + w * 0.55, '#2c3a52');
    });
});

// every pair of the core
core.forEach((a, i) => {
    core.slice(i + 1).forEach(b => {
        const w = weight(a, b);
        if (w > 0.08) edge(a, b, 3 + w * 2.5, 0.45 + w * 0.45);
    });
});

const R = 34;
nodes.forEach(n => {
    const g = add('g', {});
    add('circle', { cx: n.x, cy: n.y, r: R, fill: '#c0c0c0', stroke: n.border, 'stroke-width': 4 }, g);
    for (let k = 0; k < 10; k++) {
        const a = k * Math.PI / 5 + Math.PI / 2;
        add('line', {
            x1: n.x, y1: n.y, x2: n.x + R * Math.cos(a), y2: n.y + R * Math.sin(a),
            stroke: '#d4dce2', 'stroke-width': 1, 'stroke-opacity': 0.55
        }, g);
    }
    if (n.name) add('text', { x: n.x, y: n.y }, g).textContent = n.name;
});
```
